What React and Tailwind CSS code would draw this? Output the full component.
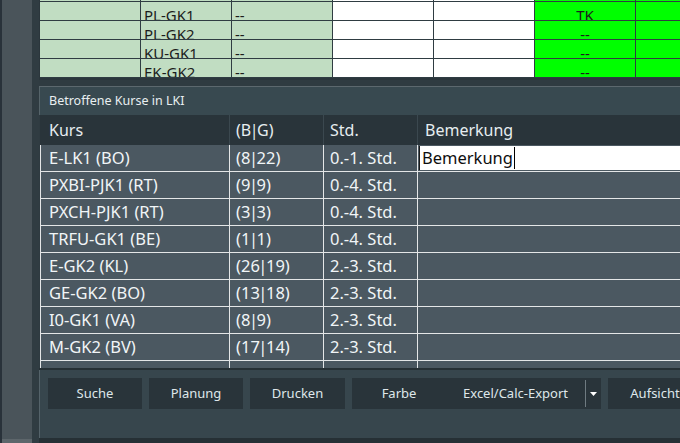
import React from "react";

const topRows = [
  ["", "", "", ""],
  ["PL-GK1", "--", "TK"],
  ["PL-GK2", "--", "--"],
  ["KU-GK1", "--", "--"],
  ["EK-GK2", "--", "--"],
];

const rows = [
  ["E-LK1 (BO)", "8", "22", "0.-1. Std."],
  ["PXBI-PJK1 (RT)", "9", "9", "0.-4. Std."],
  ["PXCH-PJK1 (RT)", "3", "3", "0.-4. Std."],
  ["TRFU-GK1 (BE)", "1", "1", "0.-4. Std."],
  ["E-GK2 (KL)", "26", "19", "2.-3. Std."],
  ["GE-GK2 (BO)", "13", "18", "2.-3. Std."],
  ["I0-GK1 (VA)", "8", "9", "2.-3. Std."],
  ["M-GK2 (BV)", "17", "14", "2.-3. Std."],
  null,
];

function TopCell({ w, bg, children, center }) {
  return (
    <div
      className={`${w} ${bg} h-full shrink-0 border-r border-[#2f3c42] overflow-hidden pt-[3px] text-[15px] leading-[20px] text-[#1c1c1c] ${center ? "text-center" : "pl-[3px]"}`}
    >
      {children}
    </div>
  );
}

function Pair({ a, b }) {
  return (
    <>
      ({a}
      <span className="-mx-[1.5px]">|</span>
      {b})
    </>
  );
}

export default function App() {
  return (
    <div className="w-[680px] h-[443px] overflow-hidden flex bg-[#2f3b41] font-['Noto_Sans',sans-serif]">
      {/* left strip */}
      <div className="w-[32px] h-full shrink-0 flex flex-col border-l-2 border-[#29323a]">
        <div className="flex-1 bg-[#4a545a]" />
        <div className="h-[4px] bg-[#5d666b]" />
      </div>
      <div className="w-[7px] shrink-0 bg-[#303c42]" />

      {/* main column */}
      <div className="flex-1 min-w-0 flex flex-col">
        {/* top table */}
        <div className="h-[80px] shrink-0 overflow-hidden bg-[#2b363c] pl-px">
          <div className="-mt-[17px]">
            {topRows.map((r, i) => (
              <div key={i} className="h-[19px] flex border-b border-[#2f3c42]">
                <TopCell w="w-[101px]" bg="bg-[#c1ddc2]" />
                <TopCell w="w-[91px]" bg="bg-[#c1ddc2]">{r[0]}</TopCell>
                <TopCell w="w-[101px]" bg="bg-[#c1ddc2]">{r[1]}</TopCell>
                <TopCell w="w-[101px]" bg="bg-white" />
                <TopCell w="w-[101px]" bg="bg-white" />
                <TopCell w="w-[101px]" bg="bg-[#00ff00]" center>{r[2]}</TopCell>
                <TopCell w="w-[101px]" bg="bg-[#00ff00]" />
              </div>
            ))}
          </div>
        </div>

        <div className="h-[6px] shrink-0 bg-[#2f3b41]" />

        {/* group panel */}
        <div className="flex-1 min-h-0 flex flex-col border-t border-[#5c686e]">
          {/* title */}
          <div className="h-[28px] shrink-0 bg-[#384950] border-l border-[#56646a] flex items-center pl-[9px] text-[12.5px] text-[#e9eff1]">
            Betroffene Kurse in LKI
          </div>

          {/* table */}
          <div className="h-[253px] shrink-0 overflow-hidden bg-[#4b5861] ml-px">
            {/* header */}
            <div className="h-[30px] flex bg-[#29343a] text-[16px] text-[#e6edf0]">
              <div className="w-[190px] shrink-0 border-r border-[#3b484f] pl-[9px] pt-[3px] leading-[24px]">Kurs</div>
              <div className="w-[94px] shrink-0 border-r border-[#3b484f] pl-[6px] pt-[3px] leading-[24px]">
                <Pair a="B" b="G" />
              </div>
              <div className="w-[94px] shrink-0 border-r border-[#3b484f] pl-[6px] pt-[3px] leading-[24px]">Std.</div>
              <div className="flex-1 pl-[7px] pt-[3px] leading-[24px] whitespace-nowrap">Bemerkung</div>
            </div>
            {rows.map((r, i) => (
              <div key={i} className="h-[27px] flex border-b border-l border-[#e4e6e7] text-[16.5px] text-[#f1f5f7]">
                <div className="w-[189px] shrink-0 border-r border-[#e4e6e7] pl-[8px] leading-[26px] whitespace-nowrap">{r ? r[0] : ""}</div>
                <div className="w-[94px] shrink-0 border-r border-[#e4e6e7] pl-[6px] leading-[26px] whitespace-nowrap">
                  {r ? <Pair a={r[1]} b={r[2]} /> : ""}
                </div>
                <div className="w-[94px] shrink-0 border-r border-[#e4e6e7] pl-[6px] leading-[26px] whitespace-nowrap">{r ? r[3] : ""}</div>
                <div className="flex-1 min-w-0 pt-px pl-px">
                  {i === 0 && (
                    <div className="h-[24px] bg-white border-l border-[#1a1a1a] flex items-center pl-[2px] text-[#0d0d0d] leading-[24px] whitespace-nowrap">
                      Bemerkung<span className="inline-block w-px h-[22px] bg-black ml-[1px]" />
                    </div>
                  )}
                </div>
              </div>
            ))}
          </div>

          <div className="h-[2px] shrink-0 bg-[#263035]" />

          {/* buttons */}
          <div className="flex-1 min-h-0 bg-[#37464d] border-l border-[#55636a] pl-[8px] pt-[8px] flex gap-[7px] text-[13px] text-[#dfe7ea]">
            <div className="w-[94px] h-[31px] shrink-0 bg-[#29343a] flex items-center justify-center">Suche</div>
            <div className="w-[94px] h-[31px] shrink-0 bg-[#29343a] flex items-center justify-center">Planung</div>
            <div className="w-[95px] h-[31px] shrink-0 bg-[#29343a] flex items-center justify-center">Drucken</div>
            <div className="w-[249px] h-[31px] shrink-0 bg-[#29343a] flex items-center">
              <div className="w-[94px] shrink-0 text-center">Farbe</div>
              <div className="flex-1 text-center whitespace-nowrap">Excel/Calc-Export</div>
              <div className="w-px h-[27px] bg-[#6f7b81]" />
              <div className="w-[15px] flex justify-center">
                <svg width="7" height="4" viewBox="0 0 7 4"><path d="M0 0H7L3.5 4Z" fill="#ffffff" /></svg>
              </div>
            </div>
            <div className="w-[94px] h-[31px] shrink-0 bg-[#29343a] flex items-center justify-center">Aufsicht</div>
          </div>

          <div className="h-[5px] shrink-0 bg-[#263035]" />
        </div>
      </div>
    </div>
  );
}
